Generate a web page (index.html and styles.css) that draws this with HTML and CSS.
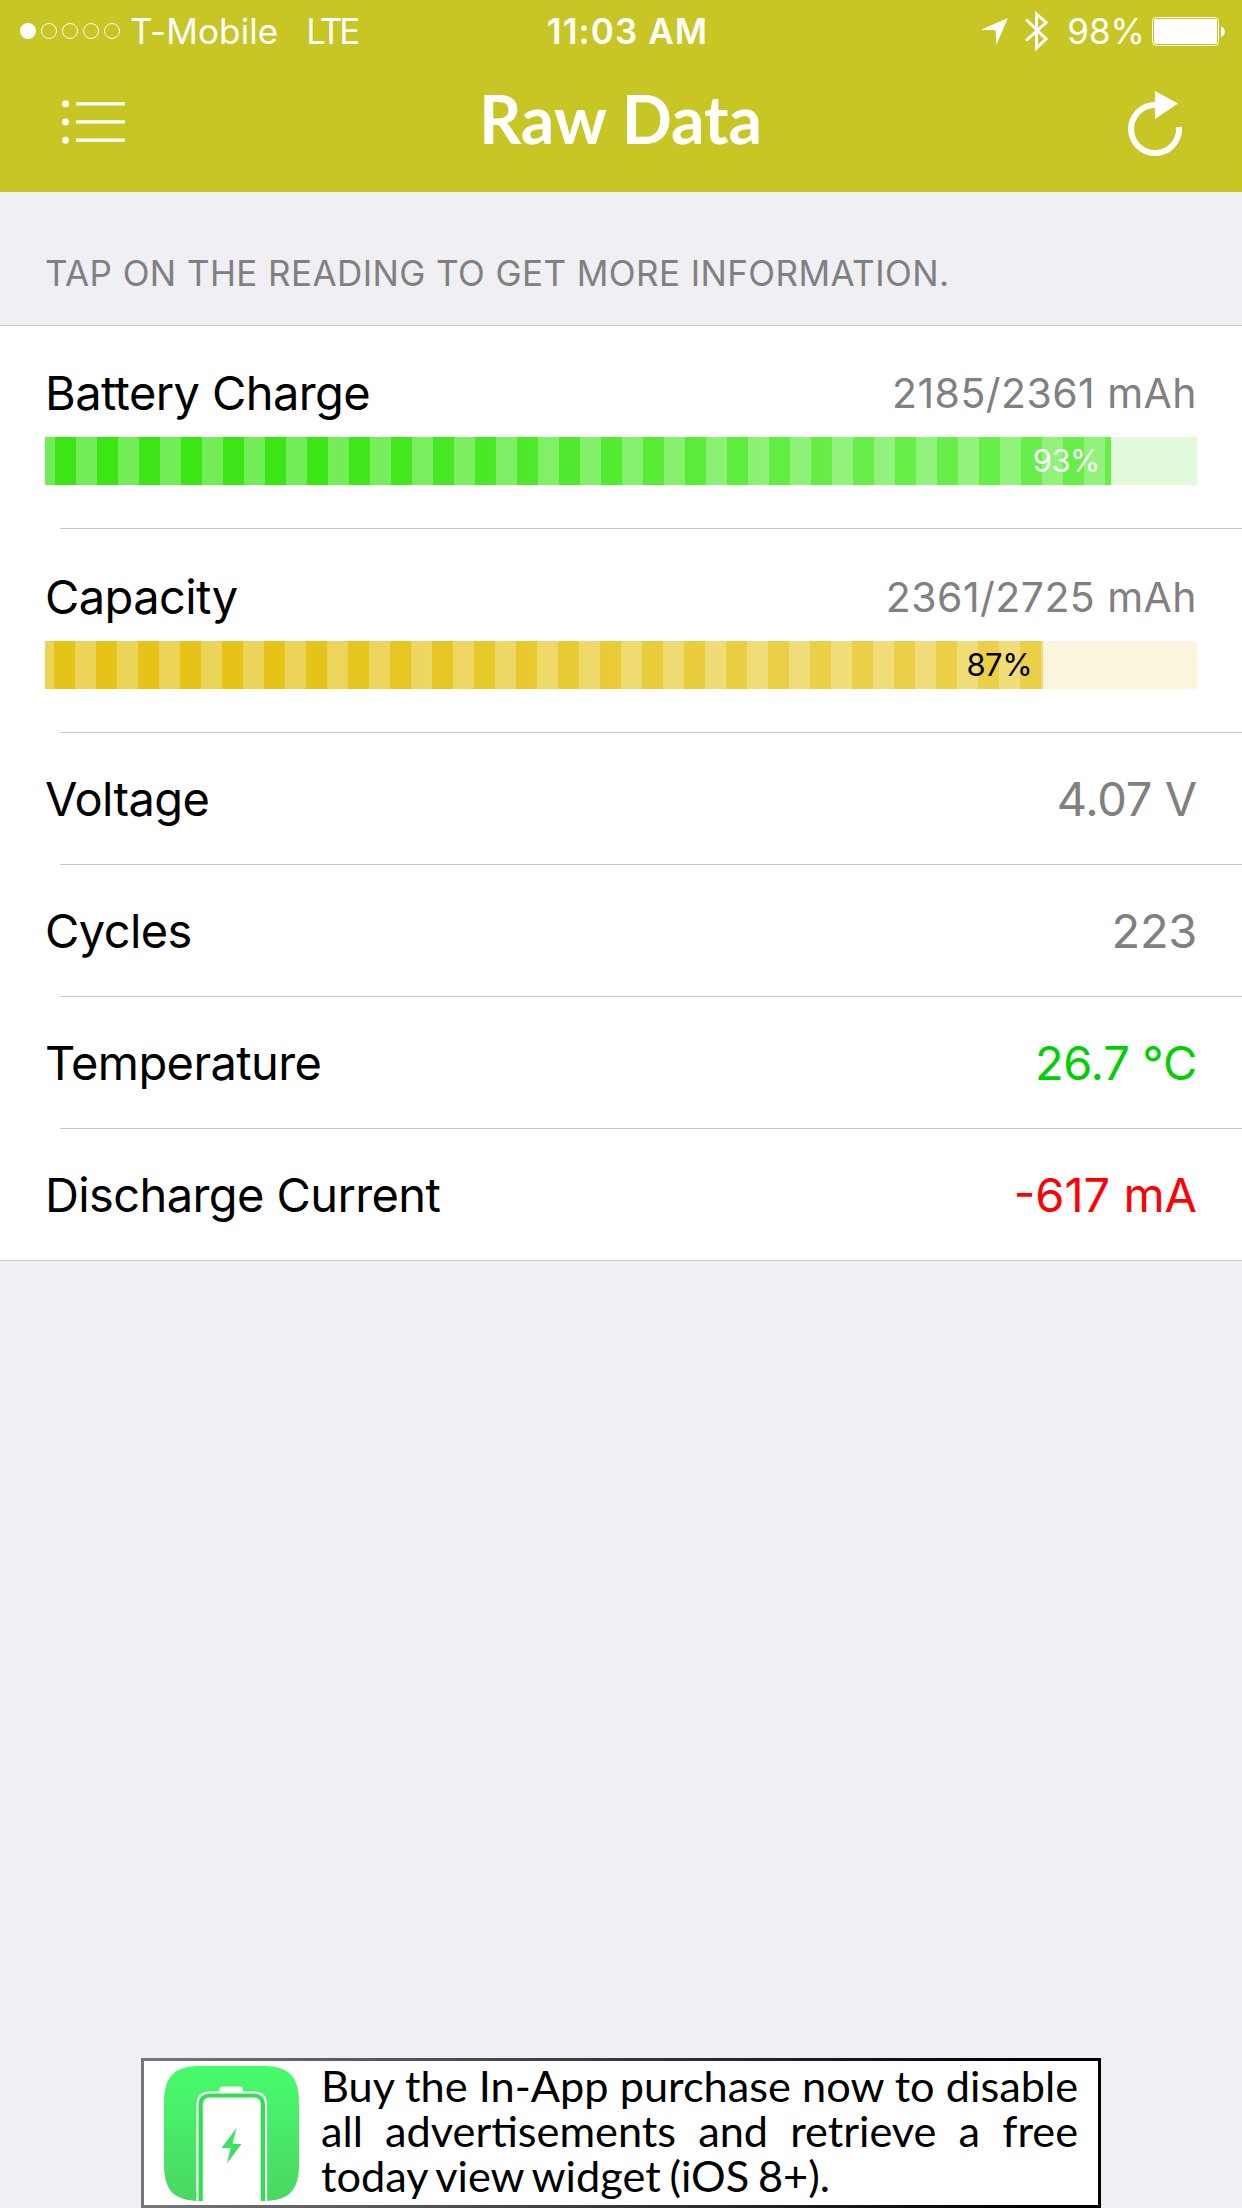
FILE: index.html
```html
<!DOCTYPE html>
<html lang="en">
<head>
	<meta charset="UTF-8">
	<title>Raw Data</title>
	<link rel="stylesheet" href="styles.css">
</head>
<body>
	<header>
		<div class="status">
			<div class="status-left">
				<svg class="signal" width="102" height="18" viewBox="0 0 102 18">
					<circle cx="8" cy="9" r="8" fill="#fff"/>
					<g fill="none" stroke="#fff" stroke-width="1">
						<circle cx="29" cy="9" r="7.5"/>
						<circle cx="50" cy="9" r="7.5"/>
						<circle cx="71" cy="9" r="7.5"/>
						<circle cx="92" cy="9" r="7.5"/>
					</g>
				</svg>
				<span class="carrier">T-Mobile</span>
				<span class="network">LTE</span>
			</div>
			<span class="time">11:03 AM</span>
			<div class="status-right">
				<svg class="location" width="27" height="27" viewBox="0 0 27 27"><path d="M27 0 15.3 27 14.7 12.2 0 11.7z" fill="#fff"/></svg>
				<svg class="bluetooth" width="24" height="42" viewBox="0 0 24 42"><path d="M1.2 9.5 21 29 11.5 38V4L21 12.5 1.2 30.5" fill="none" stroke="#fff" stroke-width="3"/></svg>
				<span class="percent">98%</span>
				<svg class="battery" width="73" height="29" viewBox="0 0 73 29">
					<rect x=".5" y=".5" width="66" height="28" rx="4" fill="none" stroke="#fff"/>
					<rect x="2" y="2" width="63" height="25" rx="2.5" fill="#fff"/>
					<path d="M69 9.500c5 1.500 5 9 0 10.500z" fill="#fff"/>
				</svg>
			</div>
		</div>
		<div class="nav">
			<svg class="menu" width="64" height="46" viewBox="0 0 64 46" fill="#fff">
				<circle cx="3.500" cy="4.800" r="3.500"/><rect x="14" y="3.200" width="49" height="3.300"/>
				<circle cx="3.500" cy="23" r="3.500"/><rect x="14" y="21.300" width="49" height="3.300"/>
				<circle cx="3.500" cy="41.200" r="3.500"/><rect x="14" y="39.500" width="49" height="3.300"/>
			</svg>
			<h1>Raw Data</h1>
			<svg class="refresh" width="54" height="66" viewBox="0 0 54 66">
				<path d="M27 14A24 24 0 1 0 51 36" fill="none" stroke="#fff" stroke-width="6"/>
				<path d="M27 0 50 12.500 27 28z" fill="#fff"/>
			</svg>
		</div>
	</header>

	<p class="hint">TAP ON THE READING TO GET MORE INFORMATION.</p>

	<ul class="readings">
		<li class="tall">
			<div class="line"><span class="label">Battery Charge</span><span class="value small">2185/2361 mAh</span></div>
			<div class="bar green"><div class="fill" style="width: 92.54%">93%</div></div>
		</li>
		<li class="tall">
			<div class="line"><span class="label">Capacity</span><span class="value small">2361/2725 mAh</span></div>
			<div class="bar yellow"><div class="fill" style="width: 86.64%">87%</div></div>
		</li>
		<li><span class="label">Voltage</span><span class="value">4.07 V</span></li>
		<li><span class="label">Cycles</span><span class="value">223</span></li>
		<li><span class="label">Temperature</span><span class="value good">26.7 °C</span></li>
		<li><span class="label">Discharge Current</span><span class="value bad">-617 mA</span></li>
	</ul>

	<footer>
		<svg class="app-icon" width="135" height="135" viewBox="0 0 135 135">
			<defs>
				<linearGradient id="iconBg" x1="0" y1="0" x2="0" y2="1">
					<stop offset="0" stop-color="#46fc6c"/>
					<stop offset="1" stop-color="#4cd663"/>
				</linearGradient>
			</defs>
			<path d="M37 0h61c27 0 37 10 37 37v61c0 27-10 37-37 37H37C10 135 0 125 0 98V37C0 10 10 0 37 0z" fill="url(#iconBg)"/>
			<!-- battery outline, body and cap -->
			<path d="M32 135V39q0-14 14-14h43.500q14 0 14 14v96z" fill="#fff" stroke="#3ae85e" stroke-width=".7"/>
			<path d="M34.500 135V39.500q0-12 12-12h42.500q12 0 12 12v95.500z" fill="#2fdf55"/>
			<path d="M38.800 135V38.500q0-7 7-7h44q7 0 7 7v96.500z" fill="#fff"/>
			<path d="M55.500 26v-2q0-3.500 3.500-3.500h16.500q3.500 0 3.500 3.500v2z" fill="#fff"/>
			<path d="M72.500 62 57.500 82h9L63 97.500 77.500 78h-9z" fill="#3ce265"/>
		</svg>
		<p>Buy the In-App purchase now to disable all advertisements and retrieve a free today view widget (iOS 8+).</p>
	</footer>
</body>
</html>
```
FILE: styles.css
```css
* {
	box-sizing: border-box;
	margin: 0;
	padding: 0;
}

body {
	width: 1242px;
	height: 2208px;
	display: flex;
	flex-direction: column;
	background: #efeff4;
	font-family: Inter, "Liberation Sans", sans-serif;
	overflow: hidden;
}

header {
	height: 192px;
	background: #c7c625;
	color: #fff;
}

/* Status bar */
.status {
	height: 60px;
	display: grid;
	grid-template-columns: 1fr auto 1fr;
	align-items: center;
	padding: 0 17px 0 20px;
	font-size: 35px;
	line-height: 62px;
}

.status-left, .status-right { display: flex; align-items: center; }
.status-right { justify-content: flex-end; }
.carrier { margin-left: 8px; letter-spacing: 0.1px; }
.network { margin-left: 28px; letter-spacing: -3px; }
.time { font-weight: 600; letter-spacing: 1.1px; margin-left: 10px; }
.location { margin-right: 17px; }
.bluetooth { margin-right: 18px; }
.percent { margin-right: 7px; }

/* Title bar */
.nav {
	height: 132px;
	display: grid;
	grid-template-columns: 1fr auto 1fr;
	align-items: start;
	padding: 0 60px 0 62px;
}

.menu { margin-top: 39px; }
.refresh { margin-top: 31px; justify-self: end; }

h1 {
	font-family: Lato, sans-serif;
	font-size: 66px;
	font-weight: 700;
	line-height: 80px;
	margin: 19px 3px 0 0;
}

.hint {
	height: 133px;
	padding: 59px 45px 0;
	font-size: 35px;
	line-height: 44px;
	letter-spacing: 0.42px;
	color: #808080;
}

/* Readings table */
.readings {
	list-style: none;
	background: #fff;
	border-top: 1px solid #c8c7cc;
	border-bottom: 1px solid #c8c7cc;
}

.readings li {
	position: relative;
	height: 132px;
	display: flex;
	justify-content: space-between;
	align-items: center;
	padding: 0 45px 1px;
}

/* Inset separator */
.readings li::after {
	content: "";
	position: absolute;
	left: 60px;
	right: 0;
	bottom: 0;
	height: 1px;
	background: #c8c7cc;
}

.readings li:last-child { height: 131px; padding-bottom: 0; }
.readings li:last-child::after { display: none; }

.readings .tall {
	display: block;
	height: 204px;
	padding-top: 36px;
}

.readings .tall:first-child { height: 203px; padding-top: 35px; }

.line {
	display: flex;
	justify-content: space-between;
	height: 76px;
	line-height: 64px;
}

.label { font-size: 47px; letter-spacing: -0.6px; }
.value { font-size: 47px; letter-spacing: -0.3px; color: #808080; }
.small { font-size: 41px; letter-spacing: 0.45px; }
.good { color: #00d000; }
.bad { color: #f00; letter-spacing: 0; }

/* Progress bars */
.bar { height: 48px; }

.fill {
	height: 48px;
	padding-right: 11px;
	text-align: right;
	font-size: 31px;
	line-height: 48px;
	letter-spacing: -0.5px;
}

.green { background: #e1fadc; }
.green .fill {
	color: #fff;
	background:
		repeating-linear-gradient(to right, rgba(255, 255, 255, 0.28) 0 21px, transparent 21px 42px) -10.5px 0 / calc(100% + 42px) 100%,
		linear-gradient(to right, #3ce616 25%, #67ee48 75%);
}

.yellow { background: #fcf5dd; }
.yellow .fill {
	color: #000;
	background:
		repeating-linear-gradient(to right, rgba(255, 255, 255, 0.28) 0 21px, transparent 21px 42px) -12px 0 / calc(100% + 42px) 100%,
		linear-gradient(to right, #e5c317 25%, #ebd047 75%);
}

/* Ad banner */
footer {
	width: 960px;
	height: 150px;
	margin: auto auto 0;
	display: flex;
	padding: 5px 20px 0 20px;
	border: 3px solid;
	border-image: linear-gradient(to right, #777, #000 92%) 1;
	background: #fff;
}

footer p {
	flex: 1;
	margin: -3px 0 0 22px;
	font-family: Lato, sans-serif;
	font-size: 43.3px;
	line-height: 45px;
	word-spacing: -2.3px;
	text-align: justify;
}
```
